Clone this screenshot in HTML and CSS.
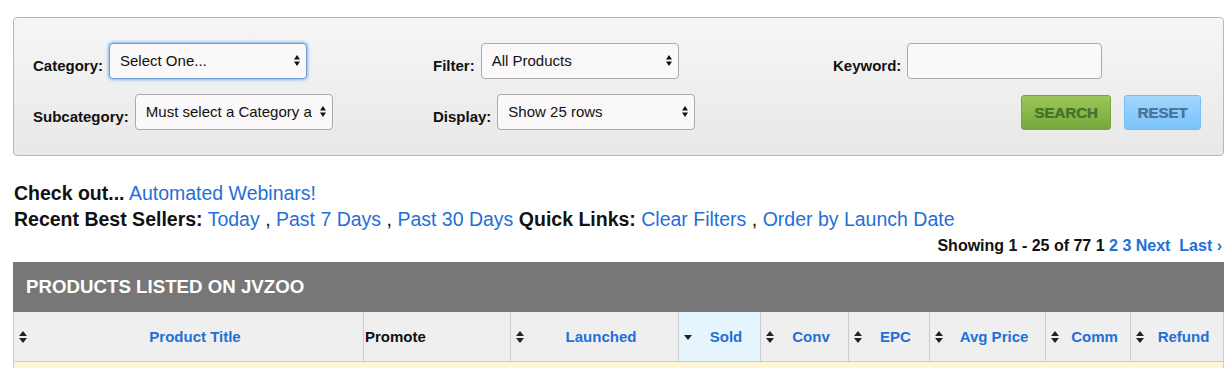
FILE: index.html
```html
<!DOCTYPE html>
<html lang="en">

<head>
    <meta charset="UTF-8">
    <meta name="viewport" content="width=device-width, initial-scale=1.0">
    <title>JVZoo Product Listing</title>
    <link rel="stylesheet" href="styles.css">
</head>

<body>
    <div class="page">
        <form class="filters">
            <div class="field">
                <label>Category:</label>
                <div class="select-wrap focused">
                    <select>
                        <option>Select One...</option>
                    </select>
                    <svg class="arrows" width="6" height="11" viewBox="0 0 6 11"><path d="M3 0L6 4.5H0z M0 6.5H6L3 11z" fill="#111"/></svg>
                </div>
            </div>
            <div class="field">
                <label>Filter:</label>
                <div class="select-wrap">
                    <select>
                        <option>All Products</option>
                    </select>
                    <svg class="arrows" width="6" height="11" viewBox="0 0 6 11"><path d="M3 0L6 4.5H0z M0 6.5H6L3 11z" fill="#111"/></svg>
                </div>
            </div>
            <div class="field">
                <label>Keyword:</label>
                <input type="text" class="keyword">
            </div>
            <div class="field">
                <label>Subcategory:</label>
                <div class="select-wrap">
                    <select>
                        <option>Must select a Category above</option>
                    </select>
                    <svg class="arrows" width="6" height="11" viewBox="0 0 6 11"><path d="M3 0L6 4.5H0z M0 6.5H6L3 11z" fill="#111"/></svg>
                </div>
            </div>
            <div class="field">
                <label>Display:</label>
                <div class="select-wrap">
                    <select>
                        <option>Show 25 rows</option>
                    </select>
                    <svg class="arrows" width="6" height="11" viewBox="0 0 6 11"><path d="M3 0L6 4.5H0z M0 6.5H6L3 11z" fill="#111"/></svg>
                </div>
            </div>
            <div class="field buttons">
                <button type="button" class="btn btn-search">Search</button>
                <button type="button" class="btn btn-reset">Reset</button>
            </div>
        </form>

        <div class="links">
            <div><b>Check out...</b> <a href="#">Automated Webinars!</a></div>
            <div>
                <b>Recent Best Sellers:</b> <a href="#">Today</a> , <a href="#">Past 7 Days</a> , <a href="#">Past 30 Days</a>
                <b>Quick Links:</b> <a href="#">Clear Filters</a> , <a href="#">Order by Launch Date</a>
            </div>
        </div>

        <div class="paging">
            Showing 1 - 25 of 77 1 <a href="#">2</a> <a href="#">3</a> <a href="#">Next</a>&nbsp; <a href="#">Last ›</a>
        </div>

        <div class="panel-title">Products Listed on JVZoo</div>
        <table class="products">
            <thead>
                <tr>
                    <th style="width: 349px"><div class="th"><span class="sort both"></span><a href="#">Product Title</a></div></th>
                    <th style="width: 146px" class="plain">Promote</th>
                    <th style="width: 167px"><div class="th"><span class="sort both"></span><a href="#">Launched</a></div></th>
                    <th style="width: 81px" class="active"><div class="th"><span class="sort down"></span><a href="#">Sold</a></div></th>
                    <th style="width: 87px"><div class="th"><span class="sort both"></span><a href="#">Conv</a></div></th>
                    <th style="width: 80px"><div class="th"><span class="sort both"></span><a href="#">EPC</a></div></th>
                    <th style="width: 115px"><div class="th"><span class="sort both"></span><a href="#">Avg Price</a></div></th>
                    <th style="width: 84px"><div class="th"><span class="sort both"></span><a href="#">Comm</a></div></th>
                    <th><div class="th"><span class="sort both"></span><a href="#">Refund</a></div></th>
                </tr>
            </thead>
            <tbody>
                <tr class="highlight">
                    <td colspan="9"></td>
                </tr>
            </tbody>
        </table>
    </div>
</body>

</html>
```

FILE: styles.css
```css
body {
    margin: 0;
    font-family: "Liberation Sans", Arial, sans-serif;
    color: #111;
    background-color: #fff;
    overflow: hidden;
}

a {
    color: #1f6fd8;
    text-decoration: none;
}

.page {
    width: 1211px;
    padding: 17px 0 0 13px;
}

.filters {
    display: grid;
    grid-template-columns: 400px 400px 1fr;
    row-gap: 15px;
    padding: 25px 22px 25px 19px;
    border: 1px solid #b8b8b8;
    border-radius: 4px;
    background: linear-gradient(#f6f6f6, #e8e8e8);
}

.field {
    display: flex;
    align-items: center;
    gap: 6px;
    height: 36px;
}

.field label {
    font-size: 15px;
    font-weight: bold;
    padding-top: 9px;
}

.select-wrap {
    position: relative;
    width: 198px;
    height: 36px;
}

.select-wrap select {
    appearance: none;
    -webkit-appearance: none;
    width: 100%;
    height: 100%;
    padding: 0 20px 1px 10px;
    border: 1px solid #aaa;
    border-radius: 4px;
    background-color: #faf8f8;
    font-family: "Liberation Sans", Arial, sans-serif;
    font-size: 15px;
    color: #111;
}

.select-wrap.focused select {
    border-color: #6e9fd6;
    box-shadow: 0 0 3px 1px #86b3e6;
    outline: none;
}

.arrows {
    position: absolute;
    right: 7px;
    top: 12px;
    pointer-events: none;
}

.keyword {
    width: 195px;
    height: 36px;
    box-sizing: border-box;
    border: 1px solid #aaa;
    border-radius: 4px;
    background-color: #faf8f8;
}

.buttons {
    justify-content: flex-end;
    gap: 13px;
}

.btn {
    height: 35px;
    border-radius: 3px;
    font-family: "Liberation Sans", Arial, sans-serif;
    font-size: 15px;
    font-weight: bold;
    text-transform: uppercase;
    cursor: pointer;
}

.btn-search {
    width: 90px;
    border: 1px solid #79a53c;
    background: linear-gradient(#9cc659, #75a93a);
    color: #46742a;
    text-shadow: 0.4px 0 0 #46742a;
}

.btn-reset {
    width: 77px;
    border: 1px solid #77bdf3;
    background: linear-gradient(#a2d7fd, #79c2fa);
    color: #4a75a3;
    text-shadow: 0.4px 0 0 #4a75a3;
}

.links {
    margin-top: 24px;
    font-size: 19.5px;
    line-height: 26px;
    padding-left: 1px;
}

.paging {
    text-align: right;
    font-size: 16px;
    font-weight: bold;
    line-height: 28px;
    margin-right: 2px;
}

.panel-title {
    height: 50px;
    margin-top: 2px;
    padding-left: 13px;
    background-color: #777;
    color: #fff;
    font-size: 18.7px;
    font-weight: bold;
    line-height: 50px;
    text-transform: uppercase;
}

.products {
    width: 100%;
    table-layout: fixed;
    border-collapse: collapse;
}

.products th {
    height: 49px;
    padding: 0;
    border: 1px solid #ccc;
    border-top: none;
    background-color: #efefef;
    font-size: 15px;
    font-weight: bold;
}

.products th.plain {
    text-align: left;
    text-indent: 1px;
}

.products th.active {
    background-color: #e6f4fd;
}

.th {
    display: flex;
    align-items: center;
    padding-left: 5px;
}

.th a {
    flex: 1;
    text-align: center;
}

.sort {
    width: 8px;
    height: 12px;
    position: relative;
}

.sort.both::before,
.sort.both::after,
.sort.down::after {
    content: "";
    position: absolute;
    left: 0;
    border-left: 4px solid transparent;
    border-right: 4px solid transparent;
}

.sort.both::before {
    top: 0;
    border-bottom: 5px solid #222;
}

.sort.both::after {
    bottom: 0;
    border-top: 5px solid #222;
}

.sort.down::after {
    top: 4px;
    border-top: 5px solid #222;
}

.highlight td {
    height: 40px;
    border: 1px solid #ccc;
    background-color: #fdf6d6;
}
```
